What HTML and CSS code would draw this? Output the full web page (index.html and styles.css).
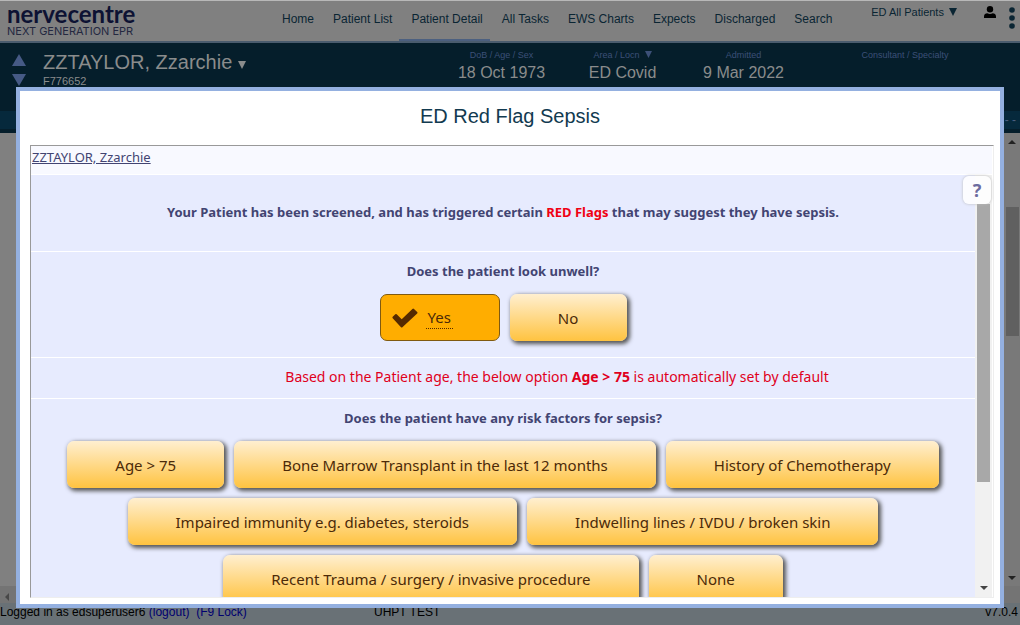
FILE: index.html
```html
<!DOCTYPE html>
<html lang="en">
<head>
<meta charset="utf-8">
<title>Nervecentre - ED Red Flag Sepsis</title>
<link rel="stylesheet" href="styles.css">
</head>
<body>
<div class="app">
  <header class="topbar">
    <div class="logo">
      <span class="logo-name">nervecentre</span>
      <span class="logo-tag">NEXT GENERATION EPR</span>
    </div>
    <nav class="nav">
      <a href="#">Home</a>
      <a href="#">Patient List</a>
      <a href="#" class="active">Patient Detail</a>
      <a href="#">All Tasks</a>
      <a href="#">EWS Charts</a>
      <a href="#">Expects</a>
      <a href="#">Discharged</a>
      <a href="#">Search</a>
    </nav>
    <div class="tools">
      <button class="filter" type="button">ED All Patients <svg width="8" height="8" viewBox="0 0 8 8" aria-hidden="true"><path d="M0 0h8L4 8z"/></svg></button>
      <button class="user" type="button" aria-label="User"><svg width="12" height="12" viewBox="0 0 12 12"><circle cx="6" cy="3.2" r="3.2"/><path d="M0 12V10.500C0 8.300 1.600 7.200 3.300 7.200Q6 8.700 8.700 7.200C10.400 7.200 12 8.300 12 10.500V12z"/></svg></button>
      <button class="more" type="button" aria-label="More"><svg width="6" height="22" viewBox="0 0 6 22"><circle cx="3" cy="3" r="2.800"/><circle cx="3" cy="11" r="2.800"/><circle cx="3" cy="19" r="2.800"/></svg></button>
    </div>
  </header>

  <section class="patient">
    <div class="arrows">
      <button type="button" aria-label="Previous patient"><svg width="14" height="12" viewBox="0 0 14 12"><path d="M7 0l7 12H0z"/></svg></button>
      <button type="button" aria-label="Next patient"><svg width="14" height="12" viewBox="0 0 14 12"><path d="M0 0h14L7 12z"/></svg></button>
    </div>
    <div class="identity">
      <button class="patient-name" type="button">ZZTAYLOR, Zzarchie <svg width="8" height="8" viewBox="0 0 8 8" aria-hidden="true"><path d="M0 0h8L4 8z"/></svg></button>
      <span class="patient-id">F776652</span>
    </div>
    <dl class="facts">
      <div><dt>DoB / Age / Sex</dt><dd>18 Oct 1973</dd></div>
      <div><dt>Area / Locn &nbsp;<svg width="7" height="7" viewBox="0 0 8 8" aria-hidden="true"><path d="M0 0h8L4 8z"/></svg></dt><dd>ED Covid</dd></div>
      <div><dt>Admitted</dt><dd>9 Mar 2022</dd></div>
      <div class="wide"><dt>Consultant / Specialty</dt><dd></dd></div>
    </dl>
  </section>
  <div class="tabs"><span>- -</span></div>

  <main class="workspace">
    <div class="workspace-page"></div>
    <div class="page-scroll">
      <svg width="8" height="4" viewBox="0 0 8 4"><path d="M0 4l4-4 4 4z"/></svg>
      <div class="page-thumb"></div>
      <svg width="8" height="4" viewBox="0 0 8 4"><path d="M0 0h8L4 4z"/></svg>
    </div>
  </main>
  <div class="hscroll"><svg width="4" height="8" viewBox="0 0 4 8"><path d="M4 0v8L0 4z"/></svg></div>
  <footer class="status">
    <span class="session">Logged in as edsuperuser6 <a href="#">(logout)</a>&nbsp; <a href="#">(F9 Lock)</a></span>
    <span class="site">UHPT TEST</span>
    <span class="version">v7.0.4</span>
  </footer>
</div>

<div class="modal" role="dialog" aria-labelledby="title">
  <h1 id="title">ED Red Flag Sepsis</h1>
  <div class="frame">
    <button class="help" type="button" aria-label="Help">?</button>
    <div class="crumb"><a href="#">ZZTAYLOR, Zzarchie</a></div>
    <div class="scroller">
      <form class="form">
        <section class="row intro">
          <p class="question">Your Patient has been screened, and has triggered certain <span class="flag">RED Flags</span> that may suggest they have sepsis.</p>
        </section>
        <section class="row">
          <p class="question">Does the patient look unwell?</p>
          <div class="choices">
            <button type="button" class="choice selected" aria-pressed="true"><svg width="26" height="20" viewBox="0 0 26 20" aria-hidden="true"><path d="M.7 10.200Q0 9.500.7 8.800L3.300 6.300Q4 5.700 4.700 6.300L9.700 11.200 20.400.9Q21.200.2 22 .9L25.200 4Q25.900 4.800 25.200 5.500L10.400 19.300Q9.700 19.900 9 19.300z"/></svg><span>Yes</span></button>
            <button type="button" class="choice" aria-pressed="false">No</button>
          </div>
        </section>
        <section class="row note">
          <p>Based on the Patient age, the below option <b>Age &gt; 75</b> is automatically set by default</p>
        </section>
        <section class="row risks">
          <p class="question">Does the patient have any risk factors for sepsis?</p>
          <div class="choices">
            <button type="button" class="choice">Age &gt; 75</button>
            <button type="button" class="choice">Bone Marrow Transplant in the last 12 months</button>
            <button type="button" class="choice">History of Chemotherapy</button>
            <button type="button" class="choice">Impaired immunity e.g. diabetes, steroids</button>
            <button type="button" class="choice">Indwelling lines / IVDU / broken skin</button>
            <button type="button" class="choice">Recent Trauma / surgery / invasive procedure</button>
            <button type="button" class="choice">None</button>
          </div>
        </section>
      </form>
      <div class="form-scroll">
        <div class="form-thumb"></div>
        <svg width="8" height="4" viewBox="0 0 8 4"><path d="M0 0h8L4 4z"/></svg>
      </div>
    </div>
  </div>
</div>
</body>
</html>
```

FILE: styles.css
```css
* { box-sizing: border-box; }
body { margin: 0; font-family: "Liberation Sans", Arial, sans-serif; font-size: 12px; }
button { border: 0; padding: 0; background: none; font: inherit; color: inherit; cursor: pointer; }
p, h1, dl, dd { margin: 0; }
a { color: inherit; text-decoration: none; }
svg { fill: currentColor; }

.app { height: 100vh; display: flex; flex-direction: column; overflow: hidden; background: #808080; }

.topbar { display: flex; height: 43px; flex: none; border-top: 1px solid #b8b8b8; border-bottom: 2px solid #4a5c6e; color: #0a2533; }
.logo { width: 270px; flex: none; padding: 1px 0 0 7px; display: flex; flex-direction: column; color: #0d1233; }
.logo-name { font: 700 24px/23px Lato, sans-serif; }
.logo-tag { font: 11px/12px Inter, sans-serif; color: #242840; }
.nav { display: flex; flex: 1; }
.nav a { padding: 11px 7px 0 12px; white-space: nowrap; }
.nav .active { border-bottom: 2px solid #4c6080; }
.tools { display: flex; align-items: flex-start; flex: none; }
.filter { font-size: 11px; margin: 5px 27px 0 0; }
.filter svg { margin-left: 2px; }
.user { color: #000; margin: 5px 13px 0 0; }
.more { margin: 6px 5px 0 0; }

.patient { display: flex; height: 68px; flex: none; background: #051e2b; color: #8a8c8c; }
.arrows { width: 43px; padding: 11px 0 0 12px; display: flex; flex-direction: column; gap: 8px; color: #465a85; }
.arrows button { height: 12px; width: 14px; line-height: 0; }
.identity { width: 398px; display: flex; flex-direction: column; align-items: flex-start; padding-top: 8px; }
.patient-name { font-size: 20px; line-height: 23px; }
.patient-id { font-size: 11px; line-height: 14px; }
.facts { display: flex; flex: 1; text-align: center; padding-top: 6px; }
.facts div { flex: 0 0 121px; }
.facts .wide { flex: 0 0 202px; }
.facts dt { font-size: 9px; line-height: 12px; color: #3c5078; }
.facts dd { font-size: 16px; line-height: 24px; }

.tabs { height: 22px; flex: none; background: #06293c; border-bottom: 4px solid #051e2b; color: #4c6080; text-align: right; padding-right: 4px; line-height: 19px; }
.workspace { flex: 1; display: flex; min-height: 0; }
.workspace-page { flex: 1; }
.page-scroll { width: 16px; padding: 7px 0 6px; display: flex; flex-direction: column; align-items: center; background: #797979; color: #222; }
.page-thumb { width: 13px; height: 129px; margin: 63px 0 auto; background: #606060; }
.hscroll { height: 17px; flex: none; padding: 4px 5px; background: #747474; color: #484848; }
.status { height: 22px; flex: none; display: flex; background: #697176; color: #000; line-height: 18px; white-space: nowrap; }
.session { width: 374px; }
.session a { color: #000070; }
.version { margin-left: auto; padding-right: 2px; }

.modal { position: absolute; inset: 87px 16px 17px; display: flex; flex-direction: column; padding: 0 6px 6px 10px; background: #fff; border: 4px solid #94b0e0; }
.modal h1 { padding: 13px 4px 17px 0; text-align: center; font-size: 20px; line-height: 24px; font-weight: 400; color: #123a50; }
.frame { position: relative; flex: 1; min-height: 0; display: flex; flex-direction: column; border: 1px solid #999; border-right: 1px solid #eee; border-bottom-color: #eee; padding-right: 1px; font-family: "Noto Sans", sans-serif; font-size: 13px; color: #424472; }
.crumb { height: 29px; flex: none; padding: 1px; background: #f8f9ff; border-bottom: 1px solid #fff; line-height: 20px; }
.crumb a { text-decoration: underline; }
.help { position: absolute; top: 30px; right: 2px; width: 28px; height: 28px; border-radius: 6px; background: rgba(255, 255, 255, .85); box-shadow: 0 0 3px #bbb; color: #6c6ca0; font-size: 18px; font-weight: 700; line-height: 26px; }
.scroller { flex: 1; min-height: 0; display: flex; }
.form { flex: 1; overflow: hidden; background: #e7ebfe; }
.row { padding: 9px 16px 0; border-bottom: 1px solid #fff; text-align: center; line-height: 20px; }
.question { font-weight: 700; }
.intro { padding-top: 27px; padding-bottom: 29px; }
.flag { color: #f00012; }
.note { padding: 9px 0 11px 108px; color: #e0001c; font-size: 14px; }
.choices { display: flex; flex-wrap: wrap; justify-content: center; gap: 10px; padding: 13px 0 16px; }
.choice { height: 47px; min-width: 117px; padding: 0 48px; border-radius: 7px; background: linear-gradient(#ffefd0, #ffc340); box-shadow: 2px 2px 4px 1px #555; color: #4c2a08; font-size: 15px; white-space: nowrap; }
.selected { display: flex; align-items: center; gap: 8px; width: 120px; padding: 0 11px; background: #ffad00; border: 1px solid #805a10; box-shadow: none; }
.selected svg { color: #552a00; }
.selected span { line-height: 22px; padding: 0 2px; border-bottom: 1px dotted #552a00; }
.form-scroll { width: 17px; padding: 29px 2px 7px; display: flex; flex-direction: column; align-items: center; background: #f1f1f1; color: #444; }
.form-thumb { width: 13px; height: 278px; margin-bottom: auto; background: #a8a8a8; }
```
